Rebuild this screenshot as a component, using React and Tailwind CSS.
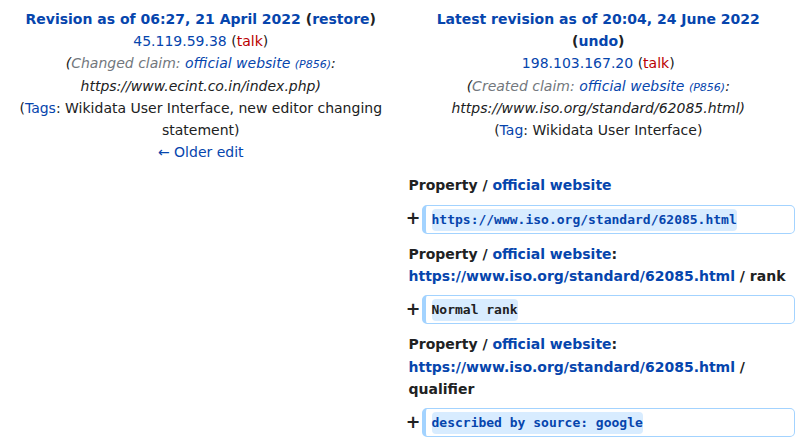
const link = "text-[#0645ad]";

function Lineno({ children }) {
  return (
    <div className="col-start-2 pt-[5px] pb-[4px] pl-[7px] pr-[2px] font-bold">
      {children}
    </div>
  );
}

function Added({ children, dark }) {
  return (
    <div className="col-start-2 flex items-stretch">
      <div className="w-[20px] flex items-center justify-end text-[17.5px] font-bold leading-none pr-[1px]">+</div>
      <div className="flex-1 border border-l-4 border-[#a3d3ff] rounded-[5px] pt-[3px] pb-[2px] pl-[6px]">
        <span
          className={
            "inline-block h-[22px] leading-[22px] bg-[#d8ecff] rounded-[4px] font-['DejaVu_Sans_Mono',monospace] text-[13px] font-bold align-top " +
            (dark ? "text-[#202122]" : link)
          }
        >
          {children}
        </span>
      </div>
    </div>
  );
}

export default function App() {
  return (
    <div className="w-[799px] h-[440px] overflow-hidden bg-white font-['DejaVu_Sans',sans-serif] text-[14px] leading-[22.2px] text-[#202122]">
      <div className="grid grid-cols-2 gap-x-[4px] gap-y-[4px] px-[4px] pt-[8px] items-start">
        <div className="text-center pb-[2px]">
          <div className="font-bold">
            <span className={link}>Revision as of 06:27, 21 April 2022</span>{" "}
            (<span className={link}>restore</span>)
          </div>
          <div>
            <span className={link}>45.119.59.38</span> (<span className="text-[#ba0000]">talk</span>)
          </div>
          <div className="italic">
            (<span className="text-[#72777d]">Changed claim: <span className={link}>official website</span>{" "}
              <span className={link + " text-[11px] leading-none"}>(P856)</span></span>: https://www.ecint.co.in/index.php)
          </div>
          <div>
            (<span className={link}>Tags</span>: Wikidata User Interface, new editor changing statement)
          </div>
          <div className={link}>← Older edit</div>
        </div>
        <div className="text-center pb-[2px]">
          <div className="font-bold">
            <span className={link}>Latest revision as of 20:04, 24 June 2022</span>
            <br />
            (<span className={link}>undo</span>)
          </div>
          <div>
            <span className={link}>198.103.167.20</span> (<span className="text-[#ba0000]">talk</span>)
          </div>
          <div className="italic">
            (<span className="text-[#72777d]">Created claim: <span className={link}>official website</span>{" "}
              <span className={link + " text-[11px] leading-none"}>(P856)</span></span>: https://www.iso.org/standard/62085.html)
          </div>
          <div>
            (<span className={link}>Tag</span>: Wikidata User Interface)
          </div>
        </div>

        <Lineno>
          Property / <span className={link}>official website</span>
        </Lineno>
        <Added>https://www.iso.org/standard/62085.html</Added>

        <Lineno>
          Property / <span className={link}>official website</span>:{" "}
          <span className={link}>https://www.iso.org/standard/62085.html</span> / rank
        </Lineno>
        <Added dark>Normal rank</Added>

        <Lineno>
          Property / <span className={link}>official website</span>:{" "}
          <span className={link}>https://www.iso.org/standard/62085.html</span> / qualifier
        </Lineno>
        <Added>described by source: google</Added>
      </div>
    </div>
  );
}
